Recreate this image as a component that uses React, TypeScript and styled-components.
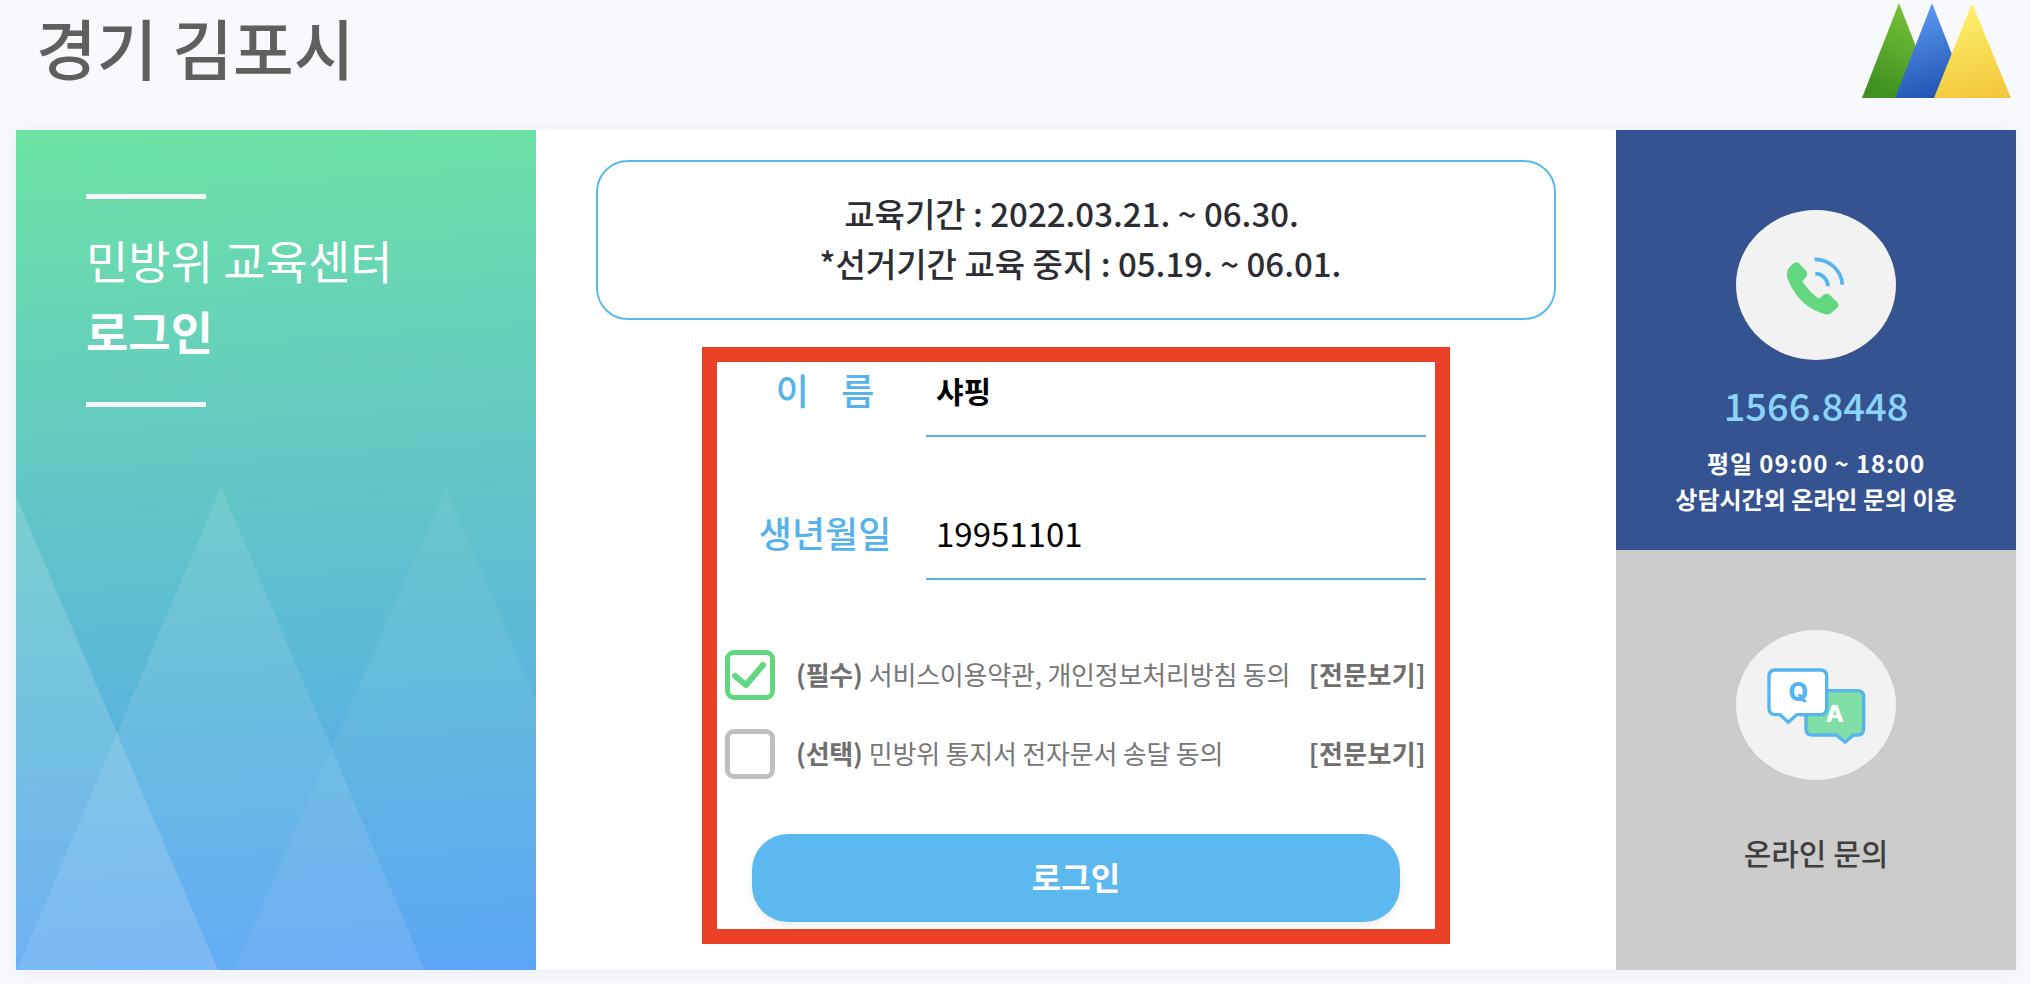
import React from "react";
import styled, { createGlobalStyle } from "styled-components";

const Global = createGlobalStyle`
  html, body { margin: 0; padding: 0; background: #f8f9fd; }
  body { font-family: "Noto Sans CJK KR", "Noto Sans", sans-serif; overflow: hidden; }
  * { box-sizing: border-box; }
`;

const Page = styled.div`
  width: 2030px;
  height: 984px;
  background: #f8f9fd;
`;
const Header = styled.header`
  height: 130px;
  display: flex;
  justify-content: space-between;
  align-items: flex-start;
  padding: 0 18px 0 36px;
`;
const Title = styled.h1`
  margin: 0;
  font-size: 66px;
  line-height: 92px;
  font-weight: 500;
  color: #5f5f5f;
`;
const Main = styled.main`
  display: flex;
  width: 2000px;
  height: 840px;
  margin-left: 16px;
  background: #fff;
  box-shadow: 0 2px 14px rgba(40, 50, 90, 0.06);
`;
const Side = styled.section`
  position: relative;
  width: 520px;
  padding: 64px 0 0 70px;
  overflow: hidden;
  color: #fff;
  background: linear-gradient(176deg, #6de3a4 0%, #52a0f6 100%);
`;
const Mountains = styled.svg`
  position: absolute;
  left: 0;
  top: 0;
`;
const Rule = styled.div`
  position: relative;
  width: 120px;
  height: 5px;
  background: #f4fbf8;
`;
const SideTitle = styled.div`
  position: relative;
  margin: 25px 0 36px;
  font-size: 46px;
  line-height: 71px;
  font-weight: 400;
`;
const SideStrong = styled.div`
  font-weight: 700;
`;
const Center = styled.section`
  flex: 1;
  padding: 30px 0 0 60px;
`;
const Notice = styled.div`
  width: 960px;
  height: 160px;
  padding-bottom: 5px;
  border: 2px solid #5ab9ef;
  border-radius: 32px;
  display: flex;
  flex-direction: column;
  align-items: center;
  justify-content: center;
  font-size: 33px;
  line-height: 50px;
  font-weight: 500;
  color: #2b2d33;
`;
const NoticeLine = styled.div<{ $lead?: boolean }>`
  padding: ${(p) => (p.$lead ? "0 0 0 9px" : "0 9px 0 0")};
`;
const FormFrame = styled.form`
  width: 748px;
  height: 597px;
  margin: 27px 0 0 106px;
  border: 15px solid #ea4025;
`;
const FieldRow = styled.div<{ $gap?: number }>`
  display: flex;
  height: 75px;
  margin-top: ${(p) => p.$gap ?? 0}px;
`;
const FieldLabel = styled.label`
  width: 130px;
  margin: 0 36px 0 43px;
  display: flex;
  justify-content: center;
  white-space: nowrap;
  font-size: 36px;
  line-height: 54px;
  font-weight: 500;
  color: #56b3ea;
`;
const FieldValue = styled.div<{ $strong?: boolean }>`
  width: 500px;
  padding-left: 10px;
  border-bottom: 2px solid #56b3ea;
  font-size: ${(p) => (p.$strong ? 30 : 33)}px;
  line-height: 56px;
  font-weight: ${(p) => (p.$strong ? 600 : 400)};
  color: #000;
`;
const Agreements = styled.div`
  display: flex;
  flex-direction: column;
  gap: 29px;
  margin-top: 70px;
  padding: 0 9px 0 8px;
`;
const AgreeRow = styled.div`
  display: flex;
  align-items: center;
  height: 50px;
`;
const AgreeText = styled.div`
  flex: 1;
  display: flex;
  margin-top: -3px;
  font-size: 26px;
  letter-spacing: -0.2px;
  color: #777;
`;
const Check = styled.span<{ $on?: boolean }>`
  flex: none;
  width: 50px;
  height: 50px;
  margin-right: 21px;
  border: 5px solid ${(p) => (p.$on ? "#62d780" : "#bfbfbf")};
  border-radius: 9px;
  background: #fff;
`;
const CheckMark = styled.svg`
  display: block;
  margin: -5px;
`;
const AgreeStrong = styled.b`
  font-weight: 700;
  color: #6f6f6f;
  margin-right: 6px;
`;
const FullLink = styled.a`
  margin-left: auto;
  font-weight: 700;
  letter-spacing: 0.3px;
  color: #6f6f6f;
`;
const LoginButton = styled.button`
  display: block;
  width: 648px;
  height: 88px;
  margin: 55px 0 0 35px;
  padding: 0 0 5px;
  border: 0;
  border-radius: 36px;
  background: #5bb9ef;
  box-shadow: 0 3px 8px rgba(0, 0, 0, 0.08);
  font-family: inherit;
  font-size: 32px;
  font-weight: 700;
  color: #fff;
`;
const Aside = styled.aside`
  width: 400px;
  display: flex;
  flex-direction: column;
`;
const AsideCard = styled.div<{ $bg: string }>`
  height: 420px;
  padding-top: 80px;
  display: flex;
  flex-direction: column;
  align-items: center;
  background: ${(p) => p.$bg};
`;
const IconDisc = styled.div`
  width: 160px;
  height: 150px;
  flex: none;
  border-radius: 50%;
  background: #f2f2f2;
  display: flex;
  align-items: center;
  justify-content: center;
`;
const Phone = styled.div`
  margin-top: 20px;
  font-size: 38px;
  line-height: 50px;
  font-weight: 500;
  color: #8ad3fa;
`;
const Hours = styled.div`
  margin-top: 15px;
  font-size: 24px;
  line-height: 36px;
  font-weight: 600;
  color: #fff;
  text-align: center;
`;
const HoursLead = styled.div`
  letter-spacing: 0.9px;
`;
const Inquiry = styled.div`
  margin-top: 47px;
  font-size: 30px;
  line-height: 50px;
  font-weight: 500;
  color: #3f3f3f;
`;

function Logo() {
  return (
    <svg width="150" height="100" viewBox="0 0 150 100">
      <defs>
        <linearGradient id="lg" x1="0.75" y1="0" x2="0.35" y2="1">
          <stop offset="0" stopColor="#7cc73a" />
          <stop offset="1" stopColor="#3f8f22" />
        </linearGradient>
        <linearGradient id="lb" x1="0.45" y1="0" x2="0.7" y2="1">
          <stop offset="0" stopColor="#5c9bf0" />
          <stop offset="1" stopColor="#1f50b0" />
        </linearGradient>
        <linearGradient id="ly" x1="0.45" y1="0" x2="0.65" y2="1">
          <stop offset="0" stopColor="#fff270" />
          <stop offset="1" stopColor="#f3c73c" />
        </linearGradient>
      </defs>
      <path d="M37 3 L74 98 H0 Z" fill="url(#lg)" />
      <path d="M70 3 L107 98 H33 Z" fill="url(#lb)" />
      <path d="M110 3 L149 98 H72 Z" fill="url(#ly)" />
    </svg>
  );
}

function PhoneIcon() {
  return (
    <svg width="63.3" height="63.3" viewBox="193 161 190 190">
      <path
        d="M222 192 Q232 186 238 192 L260 216 Q266 224 260 232 L248 246 Q268 278 298 298 L312 286 Q322 280 330 286 L354 310 Q360 318 354 324 L336 340 Q326 348 314 344 Q240 322 206 244 Q198 226 204 212 Q210 200 222 192 Z"
        fill="#62d780"
      />
      <path d="M285 180 A 82 80 0 0 1 368 256" fill="none" stroke="#52b5ee" strokeWidth="11" />
      <path d="M287 222 A 40 40 0 0 1 325 261" fill="none" stroke="#52b5ee" strokeWidth="11" />
    </svg>
  );
}

function QaIcon() {
  return (
    <svg width="100" height="100" viewBox="138 105 300 300">
      <path
        d="M278 212 H412 Q431 212 431 231 V326 Q431 345 412 345 H400 L375 367 L350 345 H277 Q258 345 258 326 V232 Z"
        fill="#80dea6"
        stroke="#56b5ee"
        strokeWidth="10"
        strokeLinejoin="round"
      />
      <path
        d="M166 150 H301 Q320 150 320 169 V265 Q320 284 301 284 H230 L205 307 L180 284 H166 Q147 284 147 265 V169 Q147 150 166 150 Z"
        fill="#fff"
        stroke="#56b5ee"
        strokeWidth="10"
        strokeLinejoin="round"
      />
      <text x="235" y="242" textAnchor="middle" fontFamily="Inter, sans-serif" fontWeight="800" fontSize="76" fill="#56b5ee">Q</text>
      <text x="344" y="306" textAnchor="middle" fontFamily="Inter, sans-serif" fontWeight="800" fontSize="70" fill="#fff">A</text>
    </svg>
  );
}

export default function App() {
  return (
    <Page>
      <Global />
      <Header>
        <Title>경기 김포시</Title>
        <Logo />
      </Header>
      <Main>
        <Side>
          <Mountains width="520" height="840" viewBox="16 130 520 840">
            <path d="M12 487 L218 970 H-194 Z" fill="#fff" fillOpacity="0.16" />
            <path d="M221 487 L425 970 H17 Z" fill="#fff" fillOpacity="0.1" />
            <path d="M446 487 L650 970 H234 Z" fill="#fff" fillOpacity="0.06" />
          </Mountains>
          <Rule />
          <SideTitle>
            민방위 교육센터
            <SideStrong>로그인</SideStrong>
          </SideTitle>
          <Rule />
        </Side>
        <Center>
          <Notice>
            <NoticeLine>교육기간 : 2022.03.21. ~ 06.30.</NoticeLine>
            <NoticeLine $lead>*선거기간 교육 중지 : 05.19. ~ 06.01.</NoticeLine>
          </Notice>
          <FormFrame>
            <FieldRow>
              <FieldLabel>이{"\u00a0\u00a0\u00a0\u00a0"}름</FieldLabel>
              <FieldValue $strong>샤핑</FieldValue>
            </FieldRow>
            <FieldRow $gap={68}>
              <FieldLabel>생년월일</FieldLabel>
              <FieldValue>19951101</FieldValue>
            </FieldRow>
            <Agreements>
              <AgreeRow>
                <Check $on>
                  <CheckMark width="50" height="50" viewBox="0 0 50 50">
                    <path d="M10 26 L21 35 L38 15" fill="none" stroke="#62d780" strokeWidth="6" strokeLinecap="round" strokeLinejoin="round" />
                  </CheckMark>
                </Check>
                <AgreeText>
                  <span><AgreeStrong>(필수)</AgreeStrong>서비스이용약관, 개인정보처리방침 동의</span>
                  <FullLink>[전문보기]</FullLink>
                </AgreeText>
              </AgreeRow>
              <AgreeRow>
                <Check />
                <AgreeText>
                  <span><AgreeStrong>(선택)</AgreeStrong>민방위 통지서 전자문서 송달 동의</span>
                  <FullLink>[전문보기]</FullLink>
                </AgreeText>
              </AgreeRow>
            </Agreements>
            <LoginButton type="button">로그인</LoginButton>
          </FormFrame>
        </Center>
        <Aside>
          <AsideCard $bg="#345390">
            <IconDisc><PhoneIcon /></IconDisc>
            <Phone>1566.8448</Phone>
            <Hours>
              <HoursLead>평일 09:00 ~ 18:00</HoursLead>
              상담시간외 온라인 문의 이용
            </Hours>
          </AsideCard>
          <AsideCard $bg="#cccccc">
            <IconDisc><QaIcon /></IconDisc>
            <Inquiry>온라인 문의</Inquiry>
          </AsideCard>
        </Aside>
      </Main>
    </Page>
  );
}
